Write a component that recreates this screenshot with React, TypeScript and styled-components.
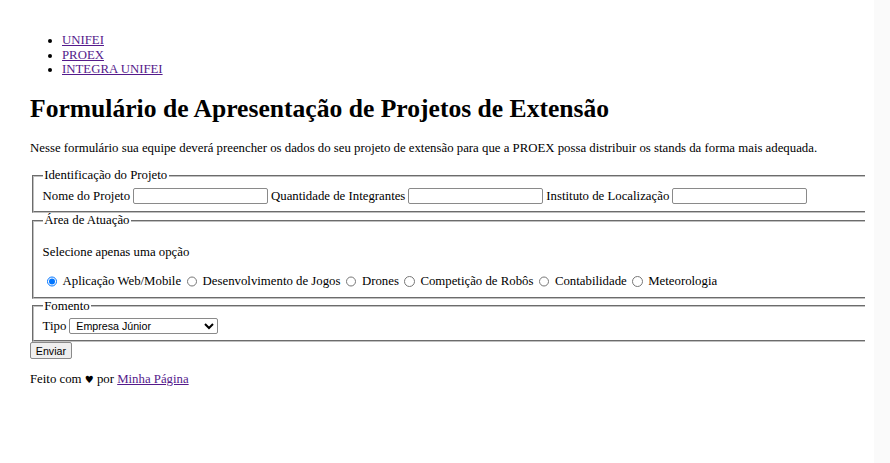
import React from "react";
import styled, { createGlobalStyle } from "styled-components";

const GlobalStyle = createGlobalStyle`
  html, body { margin: 0; padding: 0; background: #ffffff; }
  body {
    font-family: "Liberation Serif", "Times New Roman", serif;
    font-size: 12.8px;
    color: #000000;
  }
`;

const Shell = styled.div`
  display: flex;
  min-height: 463px;
`;

const Main = styled.main`
  flex: 1;
  padding: 20px 9px 0 30px;
`;

const Gutter = styled.div`
  width: 16px;
  background: #fafafa;
`;

const NavList = styled.ul`
  margin: 12.8px 0;
  padding-left: 32px;
  list-style: disc;
  line-height: 14.7px;
`;

const Link = styled.a`
  color: #551a8b;
  text-decoration: underline;
`;

const Title = styled.h1`
  font-size: 25.6px;
  font-weight: bold;
  margin: 17.2px 0;
  line-height: 29.4px;
`;

const Para = styled.p`
  margin: 12.8px 0;
  line-height: 14.7px;
`;

const Form = styled.form`
  margin: 0;
`;

const Fieldset = styled.fieldset`
  margin: 0 0 0 1.6px;
  padding: 4px 9px 6.5px;
  border: 2px groove #c0c0c0;
  border-right: none;
  min-inline-size: auto;
  line-height: 14.7px;
`;

const Legend = styled.legend`
  padding: 0 1.6px;
  line-height: 14.7px;
`;

const Row = styled.div<{ $compact?: boolean }>`
  display: flex;
  align-items: center;
  flex-wrap: wrap;
  line-height: ${(p) => (p.$compact ? "16px" : "18px")};
  height: ${(p) => (p.$compact ? "16px" : "18px")};
`;

const FieldLabel = styled.label`
  margin-right: 3px;
`;

const TextInput = styled.input`
  box-sizing: border-box;
  width: 135px;
  height: 16.5px;
  margin: 0 3px 0 0;
  padding: 1px 2px;
  border: 1px solid #8a8a8a;
  border-radius: 2px;
  font-family: "Liberation Sans", Arial, sans-serif;
  font-size: 10.67px;
  background: #ffffff;
`;

const RadioOption = styled.label`
  display: inline-flex;
  align-items: center;
  margin-right: 1.5px;
`;

const Radio = styled.input`
  width: 10.4px;
  height: 10.4px;
  margin: 0 5.6px 0 4px;
  accent-color: #0075ff;
`;

const Select = styled.select`
  box-sizing: border-box;
  width: 149px;
  height: 16.5px;
  margin: 0;
  padding: 0 2px;
  border: 1px solid #8a8a8a;
  border-radius: 2px;
  background: #ffffff;
  color: #000000;
  font-family: "Liberation Sans", Arial, sans-serif;
  font-size: 10.67px;
`;

const SubmitButton = styled.button`
  box-sizing: border-box;
  height: 17px;
  margin: 0;
  padding: 0 4.8px;
  border: 1px solid #8a8a8a;
  border-radius: 2px;
  background: #efefef;
  color: #000000;
  font-family: "Liberation Sans", Arial, sans-serif;
  font-size: 10.67px;
  line-height: 14px;
`;

const Heart = styled.span`
  font-family: "DejaVu Sans", sans-serif;
  font-size: 10px;
`;

const areas = [
  "Aplicação Web/Mobile",
  "Desenvolvimento de Jogos",
  "Drones",
  "Competição de Robôs",
  "Contabilidade",
  "Meteorologia",
];

export default function App() {
  return (
    <>
      <GlobalStyle />
      <Shell>
        <Main>
          <NavList>
            <li><Link href="#unifei">UNIFEI</Link></li>
            <li><Link href="#proex">PROEX</Link></li>
            <li><Link href="#integra">INTEGRA UNIFEI</Link></li>
          </NavList>
          <Title>Formulário de Apresentação de Projetos de Extensão</Title>
          <Para>
            Nesse formulário sua equipe deverá preencher os dados do seu projeto de extensão para que a PROEX possa distribuir os stands da forma mais adequada.
          </Para>
          <Form onSubmit={(e) => e.preventDefault()}>
            <Fieldset>
              <Legend>Identificação do Projeto</Legend>
              <Row>
                <FieldLabel htmlFor="nome">Nome do Projeto</FieldLabel>
                <TextInput id="nome" type="text" />
                <FieldLabel htmlFor="qtd">Quantidade de Integrantes</FieldLabel>
                <TextInput id="qtd" type="text" />
                <FieldLabel htmlFor="inst">Instituto de Localização</FieldLabel>
                <TextInput id="inst" type="text" />
              </Row>
            </Fieldset>
            <Fieldset>
              <Legend>Área de Atuação</Legend>
              <Para>Selecione apenas uma opção</Para>
              <Row>
                {areas.map((a, i) => (
                  <RadioOption key={a}>
                    <Radio type="radio" name="area" defaultChecked={i === 0} />
                    {a}
                  </RadioOption>
                ))}
              </Row>
            </Fieldset>
            <Fieldset>
              <Legend>Fomento</Legend>
              <Row $compact>
                <FieldLabel htmlFor="tipo">Tipo</FieldLabel>
                <Select id="tipo" defaultValue="ej">
                  <option value="ej">Empresa Júnior</option>
                  <option value="lab">Laboratório</option>
                  <option value="grupo">Grupo de Pesquisa</option>
                </Select>
              </Row>
            </Fieldset>
            <SubmitButton type="submit">Enviar</SubmitButton>
          </Form>
          <Para>
            Feito com <Heart>♥</Heart> por <Link href="#minha">Minha Página</Link>
          </Para>
        </Main>
        <Gutter />
      </Shell>
    </>
  );
}
